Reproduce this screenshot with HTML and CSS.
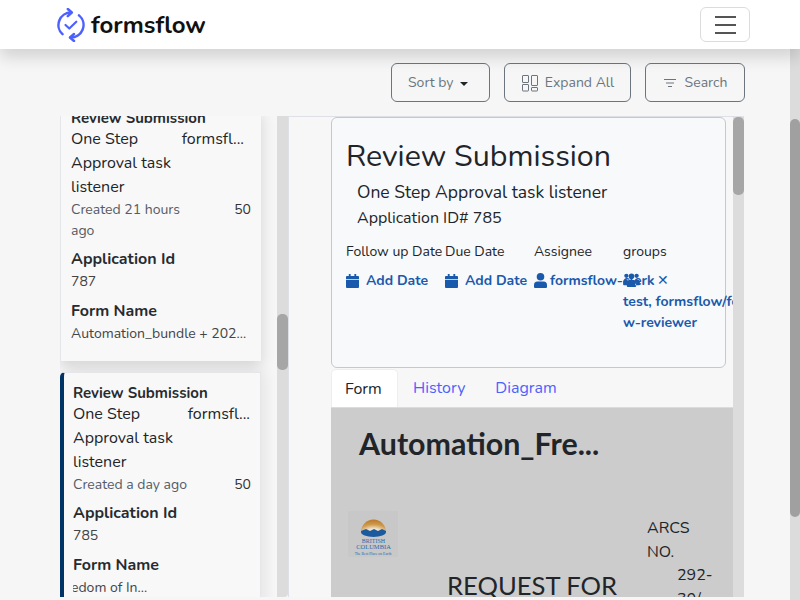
FILE: index.html
```html
<!DOCTYPE html>
<html lang="en">
<head>
<meta charset="utf-8">
<title>formsflow</title>
<link rel="stylesheet" href="styles.css">
</head>
<body>
<div class="page">
  <div class="content">
    <header class="navbar">
      <div class="brand">
        <svg class="logo" width="28" height="34" viewBox="0 0 28 34" fill="none" stroke="#4d61fc" stroke-width="2.500" stroke-linecap="round" stroke-linejoin="round">
          <path d="M14 4.500A12.500 12.500 0 0 0 5.500 26.200"/>
          <path d="M22 7.400A12.500 12.500 0 0 1 13.500 29.500"/>
          <path d="M10.800 1l4 3.500-4 3.700"/>
          <path d="M17 26l-4 3.500 4 3.500"/>
          <path d="M8.500 17l3.800 3.500 7-6.800" stroke-width="2.200"/>
        </svg>
        <span class="brand-name">formsflow</span>
      </div>
      <button class="toggler" type="button" aria-label="Menu"><span></span><span></span><span></span></button>
    </header>
    <div class="toolbar">
      <button class="tool-btn sort" type="button">Sort by <i class="caret"></i></button>
      <button class="tool-btn expand" type="button">
        <svg width="18" height="18" viewBox="0 0 18 18" fill="none" stroke="#6c757d" stroke-width="1"><rect x="1.500" y="1.500" width="6" height="7" rx=".5"/><rect x="10.500" y="1.500" width="6" height="10" rx=".5"/><rect x="1.500" y="10.500" width="6" height="6.500" rx=".5"/><rect x="10.500" y="13.500" width="6" height="3.500" rx=".5"/></svg>
        Expand All</button>
      <button class="tool-btn search" type="button">
        <svg width="14" height="10" viewBox="0 0 14 10" fill="none" stroke="#6c757d" stroke-width="1"><path d="M1 1.500h12M3 5h8M5 8.500h4"/></svg>
        Search</button>
    </div>
    <main class="workspace">
      <section class="task-list">
        <div class="task-scroll">
          <article class="task-card raised">
            <h3 class="task-title">Review Submission</h3>
            <div class="task-row"><span class="task-name">One Step Approval task listener</span><span class="task-owner">formsfl...</span></div>
            <div class="task-meta"><span class="task-date">Created 21 hours ago</span><span class="task-num">50</span></div>
            <h4 class="task-label">Application Id</h4>
            <p class="task-value">787</p>
            <h4 class="task-label">Form Name</h4>
            <p class="task-value">Automation_bundle + 202...</p>
          </article>
          <article class="task-card selected">
            <h3 class="task-title">Review Submission</h3>
            <div class="task-row"><span class="task-name">One Step Approval task listener</span><span class="task-owner">formsfl...</span></div>
            <div class="task-meta"><span class="task-date">Created a day ago</span><span class="task-num">50</span></div>
            <h4 class="task-label">Application Id</h4>
            <p class="task-value">785</p>
            <h4 class="task-label">Form Name</h4>
            <p class="task-value clip"><span class="clip-text">edom of In...</span></p>
          </article>
        </div>
        <div class="scrollbar left-bar"><div class="thumb"></div></div>
      </section>
      <section class="detail">
        <div class="detail-body">
          <div class="summary">
            <h1 class="summary-title">Review Submission</h1>
            <p class="summary-name">One Step Approval task listener</p>
            <p class="summary-app">Application ID# 785</p>
            <div class="fields">
              <div class="field f1"><span class="field-label">Follow up Date</span>
                <a class="field-value"><svg class="ico cal" viewBox="0 0 14 15"><path d="M3 0h2v2h4V0h2v2h2a1 1 0 0 1 1 1v2.500H0V3a1 1 0 0 1 1-1h2zM0 6.500h14V14a1 1 0 0 1-1 1H1a1 1 0 0 1-1-1z"/></svg>Add Date</a></div>
              <div class="field f2"><span class="field-label">Due Date</span>
                <a class="field-value"><svg class="ico cal" viewBox="0 0 14 15"><path d="M3 0h2v2h4V0h2v2h2a1 1 0 0 1 1 1v2.500H0V3a1 1 0 0 1 1-1h2zM0 6.500h14V14a1 1 0 0 1-1 1H1a1 1 0 0 1-1-1z"/></svg>Add Date</a></div>
              <div class="field f3"><span class="field-label">Assignee</span>
                <a class="field-value nowrap"><svg class="ico user" viewBox="0 0 13 15"><circle cx="6.500" cy="3.800" r="3.800"/><path d="M3.500 8.500h6A3.500 3.500 0 0 1 13 12v2a1 1 0 0 1-1 1H1a1 1 0 0 1-1-1v-2a3.500 3.500 0 0 1 3.500-3.500z"/></svg>formsflow-clerk<span class="x">✕</span></a></div>
              <div class="field f4"><span class="field-label">groups</span>
                <div class="group-value"><svg class="ico users" viewBox="0 0 18 15"><circle cx="3.500" cy="3" r="2.300"/><circle cx="14.500" cy="3" r="2.300"/><circle cx="9" cy="3.500" r="3"/><path d="M0 10a3 3 0 0 1 3-3h1.500l.5 6H1a1 1 0 0 1-1-1zM18 10a3 3 0 0 0-3-3h-1.500l-.5 6h4a1 1 0 0 0 1-1zM6.500 7.500h5A2.500 2.500 0 0 1 14 10v4a1 1 0 0 1-1 1H5a1 1 0 0 1-1-1v-4a2.500 2.500 0 0 1 2.500-2.500z"/></svg><span class="group-text">test, formsflow/forms-flo<br>w-reviewer</span></div></div>
            </div>
          </div>
          <nav class="tabs">
            <a class="tab active">Form</a>
            <a class="tab">History</a>
            <a class="tab">Diagram</a>
          </nav>
          <div class="form-pane">
            <h2 class="form-title">Automation_Fre...</h2>
            <div class="form-head">
              <svg class="bc-logo" width="50" height="46" viewBox="0 0 50 46">
                <defs><radialGradient id="sun" cx=".5" cy="1" r="1"><stop offset=".25" stop-color="#efe6d2"/><stop offset=".6" stop-color="#cf9a4c"/><stop offset="1" stop-color="#b8782a"/></radialGradient></defs>
                <rect width="50" height="46" fill="#c8c8c8"/>
                <path d="M13 21a12.500 12.500 0 0 1 25 0z" fill="url(#sun)"/>
                <path d="M13 20l5-2 4 2 4-2 4 2 4-2 4 2v1a12.500 5 0 0 1-25 0z" fill="#1c5a9f"/>
                <text class="bc-t" x="25.500" y="32">BRITISH</text>
                <text class="bc-t bc-w" x="25.500" y="37.500">COLUMBIA</text>
                <text class="bc-s" x="25" y="44">The Best Place on Earth</text>
              </svg>
              <h3 class="form-request">REQUEST FOR</h3>
              <div class="arcs">
                <p class="arcs-label">ARCS NO.</p>
                <p class="arcs-num">292-<br>30/</p>
              </div>
            </div>
          </div>
        </div>
        <div class="scrollbar right-bar"><div class="thumb"></div></div>
      </section>
    </main>
  </div>
  <div class="scrollbar page-bar"><div class="thumb"></div></div>
</div>
</body>
</html>
```
FILE: styles.css
```css
* { box-sizing: border-box; }
html, body { margin: 0; height: 600px; overflow: hidden; }
body { background: #f6f6f6; font-family: "Nunito", "Noto Sans", "Lato", sans-serif; color: #212529; font-size: 16px; }
h1, h2, h3, h4, p { margin: 0; }
.page { display: flex; height: 600px; position: relative; }
.content { flex: 1; min-width: 0; width: 800px; }
.navbar { width: 800px; height: 49px; background: #fff; display: flex; align-items: center; justify-content: space-between; padding: 0 50px 0 57px; box-shadow: 0 8px 16px rgba(0,0,0,.15); position: relative; z-index: 2; }
.brand { display: flex; align-items: center; gap: 6px; }
.logo { display: block; }
.brand-name { font-size: 24px; font-weight: 700; color: #111; line-height: 1; }
.toggler { width: 50px; height: 35px; background: #fff; border: 1px solid #dcdcdc; border-radius: 6px; padding: 0; display: flex; flex-direction: column; align-items: center; justify-content: center; gap: 6px; }
.toggler span { width: 21px; height: 2px; background: #555; display: block; }
.toolbar { display: flex; justify-content: flex-end; gap: 14px; padding: 14px 55px 0 0; height: 67px; }
.tool-btn { height: 39px; border: 1px solid #6c757d; border-radius: 6px; background: transparent; color: #6c757d; font: inherit; font-size: 14px; display: flex; align-items: center; justify-content: center; padding: 0; }
.sort { width: 99px; gap: 6px; justify-content: flex-start; padding-left: 16px; }
.expand { width: 127px; gap: 6px; }
.search { width: 100px; gap: 8px; }
.caret { width: 0; height: 0; border: 4.500px solid transparent; border-top-color: #212529; border-bottom: 0; display: block; margin-top: 2px; }
.workspace { display: flex; height: 481px; padding-left: 60px; width: 744px; }
.task-list { width: 228px; display: flex; flex: none; }
.task-scroll { width: 217px; height: 481px; overflow: hidden; padding-right: 16px; }
.task-card { background: #f8f8f8; margin-top: -8px; width: 201px; height: 253px; padding: 0 10px 0 10px; box-shadow: 0 6px 14px rgba(0,0,0,.14); border-left: 1px solid #e4e6ea; }
.raised .task-row { padding-right: 7px; }
.task-card.selected { margin-top: 11px; height: 241px; border: 1px solid #e4e6ea; border-left: 4px solid #003366; border-radius: 5px 0 0 5px; padding: 10px 9px 0 9px; box-shadow: 6px 0 12px rgba(0,0,0,.06); }
.selected .task-row { padding-right: 1px; }
.task-title { font-size: 15px; font-weight: 700; line-height: 21px; margin-bottom: -2px; color: #272b30; }
.task-row { display: flex; justify-content: space-between; font-size: 16px; line-height: 24px; }
.task-name { width: 105px; }
.task-owner { white-space: nowrap; }
.task-meta { display: flex; justify-content: space-between; font-size: 14px; line-height: 21px; color: #555b66; }
.task-date { width: 135px; }
.task-num { color: #333; }
.task-label { font-size: 16px; font-weight: 700; line-height: 24px; margin-top: 6px; color: #272b30; }
.task-value { font-size: 14px; line-height: 21px; color: #444; margin-bottom: 7px; white-space: nowrap; }
.clip { overflow: hidden; }
.clip-text { display: block; margin-left: -2px; }
.scrollbar { background: #dcdcdc; flex: none; width: 11px; }
.left-bar { height: 481px; padding-top: 198px; border-radius: 0 0 4px 0; }
.thumb { background: #a6a6a6; border-radius: 5px; width: 100%; }
.left-bar .thumb { height: 56px; }
.detail { flex: 1; display: flex; min-width: 0; border-left: 1px solid #dde0e4; border-top: 1px solid #dde0e4; height: 481px; }
.detail-body { flex: 1; min-width: 0; height: 480px; overflow: hidden; background: #f7f7f7; padding-left: 42px; }
.summary { width: 395px; height: 251px; border: 1px solid #c8c8c8; border-radius: 6px; background: #f8f9fb; padding: 20px 14px 0; position: relative; }
.summary-title { font-size: 30.400px; font-weight: 400; line-height: 36px; }
.summary-name { font-size: 17.500px; line-height: 26px; margin: 5px 0 0 11px; }
.summary-app { font-size: 16px; line-height: 24px; margin: 1px 0 0 11px; }
.fields { display: flex; margin-top: 11px; font-size: 14px; }
.field { flex: none; }
.f1 { width: 99px; } .f2 { width: 89px; } .f3 { width: 89px; } .f4 { width: 113px; }
.field-label { display: block; line-height: 21px; white-space: nowrap; }
.field-value { display: flex; align-items: center; font-weight: 700; color: #1a5aad; margin-top: 8px; line-height: 21px; white-space: nowrap; }
.ico { fill: #1a5aad; flex: none; display: block; }
.cal { width: 13px; height: 14px; margin-right: 7px; }
.user { width: 13px; height: 15px; margin-right: 3px; }
.x { margin-left: 2px; font-size: 14px; font-weight: 400; }
.group-value { font-weight: 700; color: #1a5aad; line-height: 21px; margin-top: 8px; position: relative; padding-top: 21px; white-space: nowrap; }
.users { width: 17px; height: 14px; position: absolute; left: 0; top: 3px; }
.group-text { display: block; }
.tabs { display: flex; height: 39px; width: 402px; margin-top: 1px; border-bottom: 1px solid #dcdcdc; }
.tab { font-size: 16px; line-height: 38px; padding: 0 15px; color: #4d61fc; }
.tab.active { background: #fff; color: #212529; border-radius: 5px 5px 0 0; border: 1px solid #eee; border-bottom: 0; padding: 0 13px; width: 67px; }
.form-pane { width: 402px; background: #ccc; height: 200px; font-family: "Lato", sans-serif; }
.form-title { font-size: 30.400px; font-weight: 700; line-height: 36px; padding: 17px 0 0 28px; color: #212529; }
.form-head { position: relative; margin-top: 50px; padding-left: 17px; height: 100px; }
.bc-logo { display: block; }
.bc-t { font: 6px "Liberation Serif", serif; fill: #2a6aa8; text-anchor: middle; }
.bc-w { font-size: 6.500px; }
.bc-s { font: 3.800px "Liberation Serif", serif; fill: #2a6aa8; text-anchor: middle; }
.form-request { position: absolute; left: 116px; top: 59px; font-size: 25.600px; font-weight: 400; line-height: 30px; white-space: nowrap; }
.arcs { position: absolute; left: 316px; top: 5px; width: 60px; font-family: "Nunito", "Noto Sans", sans-serif; font-size: 16px; line-height: 24px; }
.arcs-num { margin-left: 30px; margin-top: -1px; }
.right-bar { height: 480px; }
.right-bar .thumb { height: 78px; }
.page-bar { position: absolute; right: 0; top: 49px; width: 10px; height: 551px; padding-top: 70px; z-index: 1; }
.page-bar .thumb { height: 398px; background: #a0a0a0; }
```
